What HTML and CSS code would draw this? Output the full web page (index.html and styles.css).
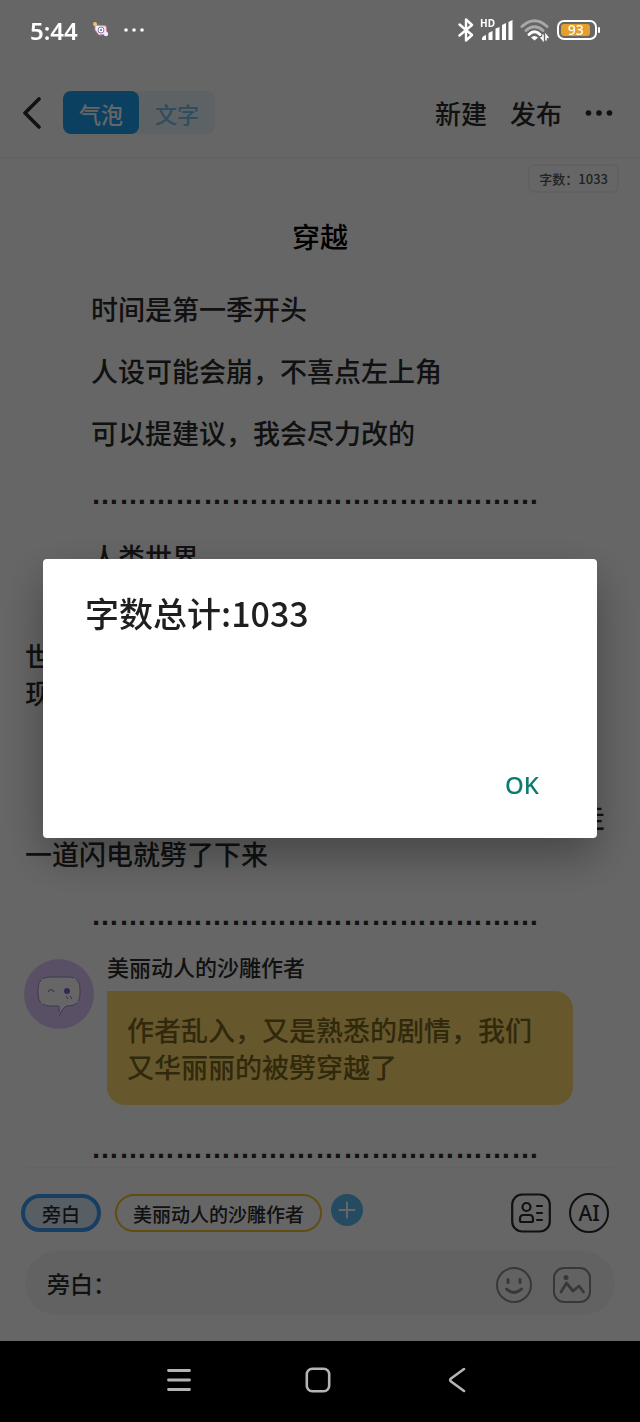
FILE: index.html
```html
<!DOCTYPE html>
<html lang="zh-CN">
<head>
<meta charset="utf-8">
<meta name="viewport" content="width=device-width, initial-scale=1">
<title>穿越</title>
<link rel="stylesheet" href="styles.css">
</head>
<body>
<div class="screen">
  <div class="status">
    <div class="status-side">
      <span class="clock">5:44</span>
      <svg class="notice" width="18" height="18" viewBox="0 0 18 18" aria-hidden="true">
        <path d="M3 4l11 1 1 8-8 1-4-5z" fill="#f4eef8" stroke="#c98ba0" stroke-width="1"/>
        <circle cx="9" cy="9" r="3" fill="#fff" stroke="#7a76a8" stroke-width="1"/>
        <circle cx="9" cy="9" r="1" fill="#5a5590"/>
        <circle cx="3" cy="3" r="2" fill="#f0c070"/>
        <circle cx="14" cy="13" r="2.2" fill="#f6e9ff"/>
      </svg>
      <svg width="20" height="4" viewBox="0 0 20 4" fill="#fff" aria-hidden="true"><circle cx="2" cy="2" r="1.8"/><circle cx="10" cy="2" r="1.8"/><circle cx="18" cy="2" r="1.8"/></svg>
    </div>
    <div class="status-side status-right">
      <svg width="16" height="24" viewBox="0 0 16 24" fill="none" stroke="#fff" stroke-width="2.4" stroke-linejoin="round" stroke-linecap="round" aria-hidden="true"><path d="M1.500 6.500L14 17l-6 5.500v-21L14 7 1.500 17.500"/></svg>
      <div class="signal">
        <span class="hd">HD</span>
        <svg width="32" height="22" viewBox="0 0 32 22" fill="#fff" aria-hidden="true"><path d="M1 20q0-3 4-4v5H1zM7.500 14l4-2v9h-4zM14.500 9.500l4-1.500v13h-4zM21 6l4-2v17h-4zM27.500 3l4-2v20h-4z"/></svg>
      </div>
      <svg width="30" height="24" viewBox="0 0 30 24" fill="none" stroke-linecap="round" aria-hidden="true">
        <path d="M2 8.500Q14.500-3 27 8.500" stroke="#a8a8a8" stroke-width="3"/>
        <path d="M6 12.500Q14.500 5 23 12.500" stroke="#a8a8a8" stroke-width="3"/>
        <path d="M9 16.500Q14.500 11 20 16.500" stroke="#fff" stroke-width="3"/>
        <path d="M14.500 22.500l-3.500-3q3.500-3 7 0z" fill="#fff"/>
        <path d="M23 17v5l-2-2.500M26 22v-5l2 2.500" stroke="#fff" stroke-width="1.600"/>
      </svg>
      <div class="battery"><span class="battery-level">93</span></div>
    </div>
  </div>

  <header class="topbar">
    <button class="icon-button" aria-label="返回"><svg width="20" height="32" viewBox="0 0 20 32" fill="none" stroke="#2b2b2b" stroke-width="3.600" stroke-linecap="round" stroke-linejoin="round"><path d="M17 2L3 16l14 14"/></svg></button>
    <div class="tabs">
      <button class="tab tab-active">气泡</button>
      <button class="tab">文字</button>
    </div>
    <div class="actions">
      <button class="action">新建</button>
      <button class="action">发布</button>
      <button class="icon-button" aria-label="更多"><svg width="28" height="6" viewBox="0 0 28 6" fill="#2b2b2b"><circle cx="3.500" cy="3" r="2.800"/><circle cx="14" cy="3" r="2.800"/><circle cx="24.500" cy="3" r="2.800"/></svg></button>
    </div>
  </header>

  <main class="story">
    <span class="count">字数：1033</span>
    <h1 class="title">穿越</h1>
    <p class="narration">时间是第一季开头</p>
    <p class="narration">人设可能会崩，不喜点左上角</p>
    <p class="narration">可以提建议，我会尽力改的</p>
    <p class="narration divider">&hellip;&hellip;&hellip;&hellip;&hellip;&hellip;&hellip;&hellip;&hellip;&hellip;&hellip;&hellip;&hellip;&hellip;&hellip;&hellip;</p>
    <p class="narration">人类世界</p>
    <p class="narration"><br>世<br>现</p>
    <p class="narration"><br></p>
    <p class="narration"><span class="line-end">走</span>一道闪电就劈了下来</p>
    <p class="narration divider">&hellip;&hellip;&hellip;&hellip;&hellip;&hellip;&hellip;&hellip;&hellip;&hellip;&hellip;&hellip;&hellip;&hellip;&hellip;&hellip;</p>
    <section class="message">
      <svg class="avatar" width="70" height="70" viewBox="0 0 70 70" aria-hidden="true">
        <circle cx="35" cy="35" r="35" fill="#e0c8ff"/>
        <path d="M26 18h18q12 0 12 12v5q0 12-12 12h-2q-5 4-6.500 9.500-.5-5.500-.5-9.500h-9q-12 0-12-12v-5q0-12 12-12z" fill="#fff" stroke="#a688cc" stroke-width="1" stroke-dasharray="24 2"/>
        <path d="M24 33q3-5 6 0" fill="none" stroke="#8c74b8" stroke-width="1.200"/>
        <circle cx="43" cy="32" r="3" fill="#8866c8"/>
        <path d="M42 37l2 3M46 37l2 3" stroke="#8c74b8" stroke-width="1"/>
      </svg>
      <div class="message-body">
        <div class="author">美丽动人的沙雕作者</div>
        <p class="bubble">作者乱入，又是熟悉的剧情，我们又华丽丽的被劈穿越了</p>
      </div>
    </section>
    <p class="narration divider">&hellip;&hellip;&hellip;&hellip;&hellip;&hellip;&hellip;&hellip;&hellip;&hellip;&hellip;&hellip;&hellip;&hellip;&hellip;&hellip;</p>
  </main>

  <footer class="composer">
    <div class="roles">
      <button class="role role-narrator">旁白</button>
      <button class="role role-author">美丽动人的沙雕作者</button>
      <button class="icon-button add" aria-label="添加角色"><svg width="32" height="32" viewBox="0 0 32 32"><circle cx="16" cy="16" r="16" fill="#5bbcf5"/><path d="M8.500 16h15M16 8.500v15" stroke="#fff" stroke-width="2" stroke-linecap="round"/></svg></button>
      <div class="tools">
        <button class="icon-button" aria-label="角色列表"><svg width="40" height="40" viewBox="0 0 40 40" fill="none" stroke="#2b2b2b" stroke-width="2.200" stroke-linecap="round"><rect x="1.200" y="1.500" width="37.600" height="37" rx="10"/><circle cx="15.500" cy="14" r="4"/><path d="M12.500 22h6q3.500 0 3.500 4v1.500q0 1.500-1.500 1.500h-10Q9 29 9 27.500V26q0-4 3.500-4zM26 13h5M26 20h5M26 27h5"/></svg></button>
        <button class="ai">AI</button>
      </div>
    </div>
    <div class="entry">
      <input class="entry-text" type="text" value="旁白：" aria-label="旁白内容">
      <button class="icon-button" aria-label="表情"><svg width="36" height="36" viewBox="0 0 36 36" fill="none" stroke="#8c8c8c" stroke-width="2" stroke-linecap="round"><circle cx="18" cy="18" r="17"/><path d="M12 12.500v3M24 12.500v3" stroke-width="3"/><path d="M10.500 22q7.500 7 15 0" stroke-width="3"/></svg></button>
      <button class="icon-button" aria-label="图片"><svg width="38" height="36" viewBox="0 0 38 36" fill="none" stroke="#8c8c8c" stroke-width="2" stroke-linecap="round" stroke-linejoin="round"><rect x="1" y="1" width="36" height="34" rx="10"/><circle cx="13" cy="10.500" r="2.500" fill="#8c8c8c" stroke="none"/><path d="M8 25l5.500-9 6.500 8 6-5 4.500 6" stroke-width="2.800"/></svg></button>
    </div>
  </footer>

  <nav class="system-nav" aria-label="系统导航">
    <button class="nav-button" aria-label="最近任务"><svg width="24" height="24" viewBox="0 0 24 24" stroke="#b4b4b4" stroke-width="2.800" stroke-linecap="round"><path d="M1.500 2.500h21M1.500 12h21M1.500 21.500h21"/></svg></button>
    <button class="nav-button" aria-label="主页"><svg width="26" height="26" viewBox="0 0 26 26" fill="none" stroke="#b4b4b4" stroke-width="2.600"><rect x="1.800" y="1.800" width="22.400" height="22.400" rx="5.500"/></svg></button>
    <button class="nav-button" aria-label="返回上级"><svg width="18" height="26" viewBox="0 0 18 26" fill="none" stroke="#b4b4b4" stroke-width="2.600" stroke-linecap="round" stroke-linejoin="round"><path d="M16 2L3 11.500q-1.500 1.500 0 3L16 24"/></svg></button>
  </nav>
</div>

<div class="scrim">
  <div class="dialog" role="dialog" aria-modal="true" aria-labelledby="dialog-title">
    <h2 class="dialog-title" id="dialog-title">字数总计:1033</h2>
    <button class="dialog-ok">OK</button>
  </div>
</div>
</body>
</html>
```
FILE: styles.css
```css
* { box-sizing: border-box; }

body {
  margin: 0;
  background: #fff;
  color: #2b2b2b;
  font-family: "Noto Sans CJK SC", sans-serif;
  font-weight: 500;
}

button,
input {
  margin: 0;
  padding: 0;
  border: 0;
  background: none;
  color: inherit;
  font: inherit;
}

svg { display: block; }

h1, h2, p { margin: 0; }

.screen {
  display: flex;
  flex-direction: column;
  min-height: 100vh;
}

.icon-button {
  display: flex;
  flex: none;
}

/* Status bar */
.status {
  position: relative;
  z-index: 2;
  display: flex;
  justify-content: space-between;
  height: 68px;
  padding: 0 43px 8px 30px;
  color: #fff;
  font-family: "Noto Sans", sans-serif;
}

.status-side {
  display: flex;
  align-items: center;
  gap: 14px;
}

.status-right { gap: 7px; }

.clock {
  font-size: 24px;
  font-weight: 600;
}

.signal { position: relative; }

.hd {
  position: absolute;
  top: -2px;
  left: -1px;
  font-size: 10px;
  font-weight: 700;
  line-height: 12px;
}

.battery {
  position: relative;
  width: 40px;
  height: 20px;
  padding: 2px;
  border: 2px solid #fff;
  border-radius: 7px;
}

.battery::after {
  content: "";
  position: absolute;
  top: 5px;
  right: -5px;
  width: 2px;
  height: 6px;
  border-radius: 1px;
  background: #fff;
}

.battery-level {
  display: block;
  width: 92%;
  border-radius: 3px;
  background: #e69f28;
  font-size: 14px;
  font-weight: 500;
  line-height: 12px;
  text-align: center;
}

/* Top bar */
.topbar {
  display: flex;
  align-items: center;
  height: 90px;
  padding: 0 27px 0 22px;
  border-bottom: 1px solid #efefef;
}

.tabs {
  display: flex;
  margin-left: 21px;
  border-radius: 8px;
  background: #e9f5fd;
}

.tab {
  width: 76px;
  height: 43px;
  border-radius: 8px;
  color: #74c0f0;
  font-size: 22px;
}

.tab-active {
  background: #1da1f2;
  color: #fff;
}

.actions {
  display: flex;
  align-items: center;
  gap: 23px;
  margin-left: auto;
}

.action {
  font-size: 26px;
  line-height: 36px;
}

/* Story */
.story {
  display: flex;
  flex: 1;
  flex-direction: column;
  gap: 25px;
  padding: 6px 25px 0;
}

.count {
  align-self: flex-end;
  margin-right: -4px;
  padding: 0 9px;
  border: 2px solid #f3f3f3;
  border-radius: 6px;
  color: #555;
  font-size: 13px;
  line-height: 25px;
}

.title {
  padding-bottom: 10px;
  color: #000;
  font-size: 28px;
  font-weight: 500;
  line-height: 37px;
  text-align: center;
}

.narration {
  font-size: 27px;
  line-height: 37px;
  text-indent: 66px;
}

.divider {
  font-family: "Liberation Sans", sans-serif;
  font-size: 28px;
  font-weight: 700;
}

.line-end {
  display: block;
  padding-right: 10px;
  text-align: right;
}

.message {
  display: flex;
  gap: 13px;
  margin-left: -1px;
}

.avatar { flex: none; }

.message-body {
  flex: 1;
  max-width: 466px;
}

.author {
  margin-bottom: 18px;
  font-size: 22px;
  line-height: 14px;
}

.bubble {
  padding: 20px;
  border-radius: 0 18px 18px 18px;
  background: #ffdc6e;
  color: #7a6620;
  font-size: 27px;
  line-height: 37px;
}

/* Composer */
.composer {
  padding: 26px 25px;
  border-top: 1px solid #f7f7f7;
  border-radius: 28px 28px 0 0;
}

.roles {
  display: flex;
  align-items: center;
  margin: 0 6px 19px -4px;
}

.role {
  height: 38px;
  border-radius: 19px;
  font-size: 19px;
}

.role-narrator {
  margin-right: 14px;
  padding: 0 17px;
  border: 4px solid #3d9bf5;
  background: #dceefb;
}

.role-author {
  margin-right: 9px;
  padding: 0 16px;
  border: 2px solid #f0c030;
}

.add { padding-bottom: 6px; }

.tools {
  display: flex;
  gap: 18px;
  margin: -2px 0 -1px auto;
}

.ai {
  width: 40px;
  height: 40px;
  border: 2px solid #2b2b2b;
  border-radius: 50%;
  font-family: "Noto Sans", sans-serif;
  font-size: 21px;
}

.entry {
  display: flex;
  align-items: center;
  gap: 21px;
  height: 64px;
  padding: 4px 24px 0 22px;
  border-radius: 32px;
  background: #f5f5f5;
}

.entry-text {
  flex: 1;
  min-width: 0;
  padding-bottom: 4px;
  font-size: 23px;
}

/* System navigation */
.system-nav {
  position: relative;
  z-index: 2;
  display: flex;
  justify-content: center;
  gap: 91px;
  height: 81px;
  padding: 0 4px 4px 0;
  background: #000;
}

.nav-button {
  display: flex;
  align-items: center;
  justify-content: center;
  width: 48px;
}

/* Dialog */
.scrim {
  position: fixed;
  inset: 0;
  z-index: 1;
  display: flex;
  align-items: center;
  padding: 56px 43px 81px;
  background: rgba(0, 0, 0, 0.6);
}

.dialog {
  display: flex;
  flex: 1;
  flex-direction: column;
  justify-content: space-between;
  min-height: 279px;
  padding: 32px 42px;
  border-radius: 4px;
  background: #fff;
  box-shadow: 0 18px 44px rgba(0, 0, 0, 0.32);
}

.dialog-title {
  color: #1f1f1f;
  font-size: 34px;
  font-weight: 500;
  line-height: 44px;
}

.dialog-ok {
  align-self: flex-end;
  padding: 0 16px;
  color: #0b7d70;
  font-family: "Noto Sans", sans-serif;
  font-size: 24px;
  font-weight: 500;
  line-height: 42px;
}
```
